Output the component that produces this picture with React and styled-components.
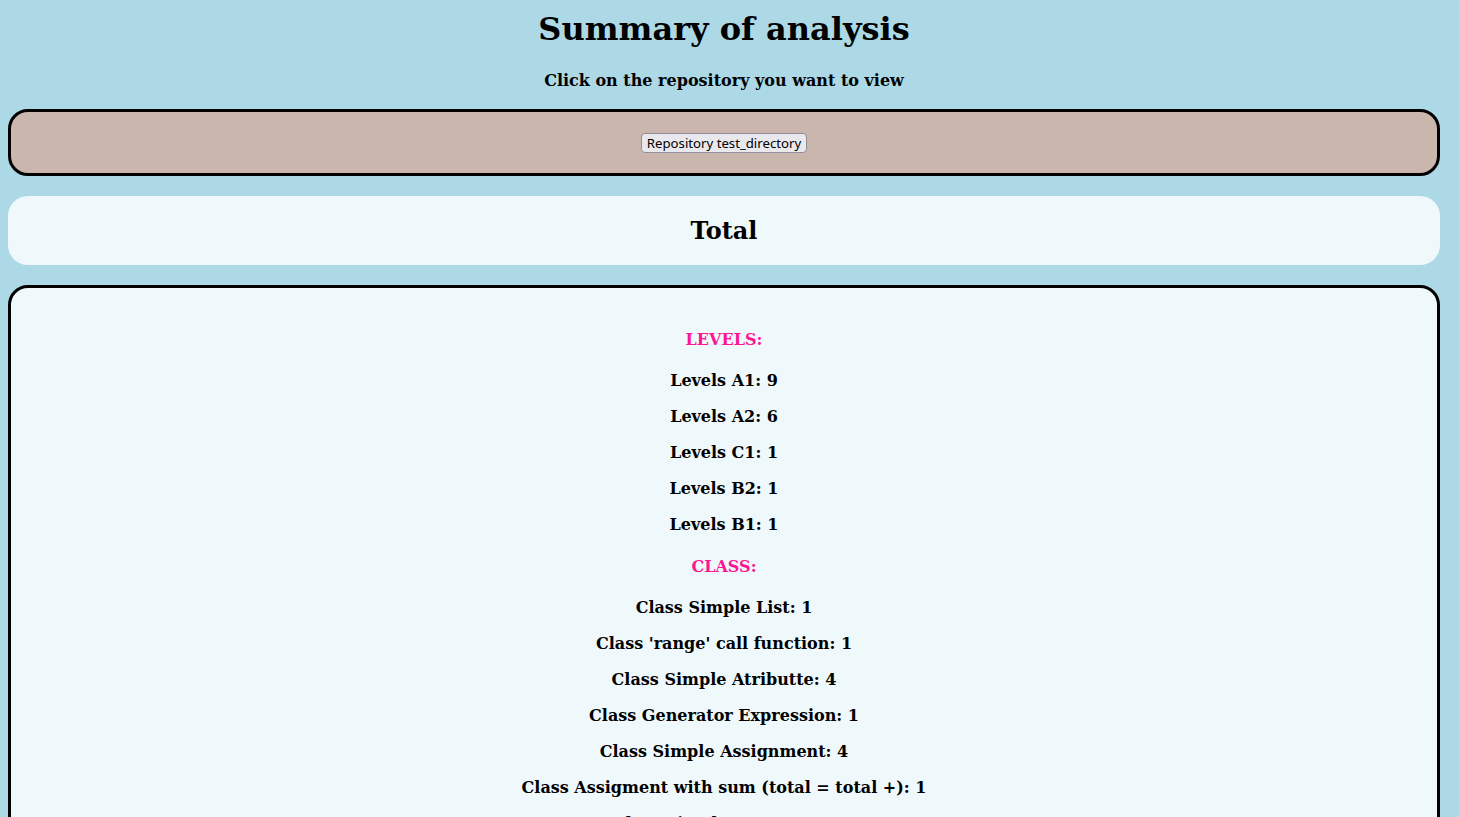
import React from "react";
import styled, { createGlobalStyle } from "styled-components";

const Global = createGlobalStyle`
  html, body { background: #add8e6; }
  body {
    margin: 8px 19px 8px 8px;
    font-family: "DejaVu Serif", serif;
    color: #000;
  }
`;

const Title = styled.h1`
  margin: 3px 0 0;
  text-align: center;
  font-size: 32px;
  font-weight: bold;
  line-height: 37px;
`;

const Subtitle = styled.h3`
  margin: 23px 0 19px;
  text-align: center;
  font-size: 16px;
  line-height: 19px;
`;

const Panel = styled.section`
  background: ${(p) => p.$bg};
  border: ${(p) => (p.$bordered ? "3px solid #000" : "none")};
  border-radius: 20px;
  margin-bottom: 20px;
  display: flex;
  flex-direction: column;
  align-items: center;
  padding: ${(p) => p.$pad};
`;

const RepoButton = styled.button`
  font-family: "Noto Sans", "DejaVu Sans", sans-serif;
  font-size: 13.2px;
  line-height: 16px;
  color: #000;
  background: #e9e9ed;
  border: 1px solid #8f8f9d;
  border-radius: 4px;
  padding: 1px 5px;
  cursor: pointer;
`;

const TotalHeading = styled.h2`
  margin: 0;
  font-size: 24px;
  line-height: 28px;
`;

const GroupHeading = styled.h4`
  margin: ${(p) => (p.$first ? "0" : "23px")} 0 0;
  color: #ff1493;
  font-size: 16px;
  line-height: 19px;
  text-align: center;
`;

const List = styled.div`
  display: flex;
  flex-direction: column;
  align-items: center;
  gap: 17px;
  margin: 22px 0 0;
`;

const Item = styled.p`
  margin: 0;
  font-size: 16px;
  line-height: 19px;
  font-weight: bold;
  text-align: center;
`;

const groups = [
  {
    name: "LEVELS:",
    items: [
      "Levels A1: 9",
      "Levels A2: 6",
      "Levels C1: 1",
      "Levels B2: 1",
      "Levels B1: 1",
    ],
  },
  {
    name: "CLASS:",
    items: [
      "Class Simple List: 1",
      "Class 'range' call function: 1",
      "Class Simple Atributte: 4",
      "Class Generator Expression: 1",
      "Class Simple Assignment: 4",
      "Class Assigment with sum (total = total +): 1",
      "Class Simple For Loop: 1",
      "Class Simple Function: 2",
      "Class Simple Return: 2",
    ],
  },
];

export default function App() {
  return (
    <>
      <Global />
      <Title>Summary of analysis</Title>
      <Subtitle>Click on the repository you want to view</Subtitle>
      <Panel $bg="#cbb6ae" $bordered $pad="21px 0 20px">
        <RepoButton type="button">Repository test_directory</RepoButton>
      </Panel>
      <Panel $bg="#eff8fb" $pad="21px 0 20px">
        <TotalHeading>Total</TotalHeading>
      </Panel>
      <Panel $bg="#eff8fb" $bordered $pad="42px 0 40px">
        {groups.map((g, i) => (
          <React.Fragment key={g.name}>
            <GroupHeading $first={i === 0}>{g.name}</GroupHeading>
            <List>
              {g.items.map((t) => (
                <Item key={t}>{t}</Item>
              ))}
            </List>
          </React.Fragment>
        ))}
      </Panel>
    </>
  );
}
